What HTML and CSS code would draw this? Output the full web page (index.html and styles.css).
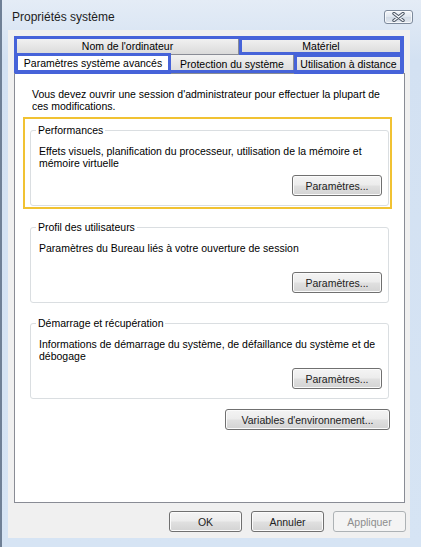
FILE: index.html
```html
<!DOCTYPE html>
<html lang="fr">
<head>
  <meta charset="UTF-8">
  <title>Propriétés système</title>
  <link rel="stylesheet" href="styles.css">
</head>
<body>
  <div class="window">
    <div class="titlebar">
      <span class="title">Propriétés système</span>
      <button class="close" aria-label="Fermer">
        <svg width="13" height="10" viewBox="0 0 13 10">
          <path d="M2 1.5 L11 8.5 M11 1.5 L2 8.5" stroke="#4b5563" stroke-width="3.4" stroke-linecap="round" fill="none"/>
          <path d="M2 1.5 L11 8.5 M11 1.5 L2 8.5" stroke="#f6f8fb" stroke-width="1.4" stroke-linecap="round" fill="none"/>
        </svg>
      </button>
    </div>

    <div class="client">
      <div class="tabs hl-strip">
        <div class="tab-row back">
          <div class="tab tab-nom">Nom de l'ordinateur</div>
          <div class="tab tab-mat hl">Matériel</div>
        </div>
        <div class="tab-row front">
          <div class="tab tab-adv active hl">Paramètres système avancés</div>
          <div class="tab tab-prot">Protection du système</div>
          <div class="tab tab-dist hl">Utilisation à distance</div>
        </div>
      </div>

      <div class="panel">
        <p class="intro">Vous devez ouvrir une session d'administrateur pour effectuer la plupart de ces modifications.</p>

        <div class="group-wrap hl-yellow">
          <fieldset class="group">
            <legend>Performances</legend>
            <p class="desc">Effets visuels, planification du processeur, utilisation de la mémoire et mémoire virtuelle</p>
            <div class="actions"><button class="btn btn-settings">Paramètres...</button></div>
          </fieldset>
        </div>

        <div class="group-wrap">
          <fieldset class="group">
            <legend>Profil des utilisateurs</legend>
            <p class="desc">Paramètres du Bureau liés à votre ouverture de session</p>
            <div class="actions"><button class="btn btn-settings">Paramètres...</button></div>
          </fieldset>
        </div>

        <div class="group-wrap">
          <fieldset class="group">
            <legend>Démarrage et récupération</legend>
            <p class="desc">Informations de démarrage du système, de défaillance du système et de débogage</p>
            <div class="actions"><button class="btn btn-settings">Paramètres...</button></div>
          </fieldset>
        </div>

        <div class="actions env">
          <button class="btn btn-env">Variables d'environnement...</button>
        </div>
      </div>

      <div class="footer">
        <button class="btn btn-dlg">OK</button>
        <button class="btn btn-dlg">Annuler</button>
        <button class="btn btn-dlg" disabled>Appliquer</button>
      </div>
    </div>
  </div>
</body>
</html>
```

FILE: styles.css
```css
body {
  margin: 0;
  font-family: "Liberation Sans", Arial, sans-serif;
  font-size: 10.5px;
  color: #000;
  background: #d6e4f4;
}
.window {
  width: 421px;
  height: 547px;
  box-sizing: border-box;
  border-left: 2px solid #6f8096;
  padding: 0 11px 9px 6px;
  background: linear-gradient(#e4ecf6, #d3e1f2 60px, #d6e4f4);
  display: flex;
  flex-direction: column;
}
.titlebar {
  height: 30px;
  flex: none;
  display: flex;
  align-items: flex-start;
  justify-content: space-between;
}
.title {
  margin: 10px 0 0 4px;
  font-size: 12px;
  line-height: 15px;
  color: #1c1c1c;
}
.close {
  margin: 10px -3px 0 0;
  width: 29px;
  height: 14px;
  padding: 0;
  border: 1px solid #7d8a9c;
  border-radius: 3px;
  background: linear-gradient(#f3f6fa, #dfe6ef 50%, #d2dbe6 51%, #e2e8f0);
  box-shadow: inset 0 0 0 1px rgba(255, 255, 255, 0.7);
  display: flex;
  align-items: center;
  justify-content: center;
}
.client {
  flex: 1;
  background: #f0f0f0;
  padding: 7px 5px 6px 6px;
  display: flex;
  flex-direction: column;
}

/* tabs */
.tabs {
  position: relative;
  margin: 0 1px;
  height: 36px;
  flex: none;
}
.tab-row {
  display: flex;
}
.tab-row.back {
  height: 17px;
  padding-left: 1px;
}
.tab-row.front {
  position: relative;
  z-index: 2;
  height: 19px;
  align-items: flex-start;
}
.tab {
  position: relative;
  box-sizing: border-box;
  border: 1px solid #898c95;
  border-right: none;
  border-bottom: none;
  background: linear-gradient(#f2f2f2, #e6e6e6 50%, #dadada);
  text-align: center;
  white-space: nowrap;
}
.tab:last-child {
  border-right: 1px solid #898c95;
}
.back .tab {
  height: 17px;
  line-height: 16px;
}
.front .tab {
  height: 19px;
  line-height: 18px;
}
.tab-nom { width: 222px; }
.tab-mat { width: 166px; }
.tab-adv { width: 156px; }
.tab-prot { width: 122px; }
.tab-dist { width: 111px; }
.front .tab.active {
  height: 21px;
  margin-top: -1px;
  background: #fff;
  line-height: 18px;
  border-right: 1px solid #898c95;
  z-index: 1;
}
.front .tab.active + .tab {
  border-left: none;
}

/* annotation boxes */
.hl::after,
.hl-strip::after,
.hl-yellow::after {
  content: "";
  position: absolute;
  pointer-events: none;
  z-index: 3;
}
.hl::after {
  inset: -1px 0 -1px 0;
  border: 3px solid #4663d9;
}
.tab.active.hl::after {
  inset: -1px -1px 0 -1px;
}
.hl-strip::after {
  inset: -1px 0 0 -1px;
  border: 3px solid #4663d9;
}
.hl-yellow::after {
  left: -7px;
  top: -7px;
  right: -3px;
  bottom: -3px;
  border: 2px solid #f1c232;
}

/* panel */
.panel {
  position: relative;
  height: 430px;
  box-sizing: border-box;
  background: #fff;
  border: 1px solid #898c95;
  padding: 14px 15px 0 15px;
  flex: none;
}
.intro {
  margin: 0 0 12px 2px;
  line-height: 12px;
}
.group-wrap {
  position: relative;
  margin-bottom: 14px;
}
.group-wrap.hl-yellow {
  margin-bottom: 15px;
}
.group {
  margin: 0;
  padding: 8px 6px 9px 8px;
  border: 1px solid #dadee1;
  border-radius: 3px;
}
.group legend {
  margin-left: -3px;
  padding: 0 2px;
  line-height: 13px;
}
.desc {
  margin: 0;
  line-height: 12px;
  min-height: 24px;
}
.actions {
  display: flex;
  justify-content: flex-end;
  margin-top: 6px;
}
.actions.env {
  margin: -4px -1px 0 0;
}

/* buttons */
.btn {
  box-sizing: border-box;
  height: 21px;
  padding: 0;
  font: inherit;
  color: #222;
  border: 1px solid #707070;
  border-radius: 3px;
  background: linear-gradient(#f4f4f4, #ececec 48%, #e0e0e0 52%, #d3d3d3);
  box-shadow: inset 0 0 0 1px #fbfbfb;
}
.btn:disabled {
  color: #8d8d8d;
  border-color: #adb2b5;
  background: #f4f4f4;
  box-shadow: none;
}
.btn-settings { width: 90px; }
.btn-env { width: 165px; }
.btn-dlg { width: 73px; }
.footer {
  display: flex;
  justify-content: flex-end;
  gap: 9px;
  margin: 8px -1px 0 0;
}
```
